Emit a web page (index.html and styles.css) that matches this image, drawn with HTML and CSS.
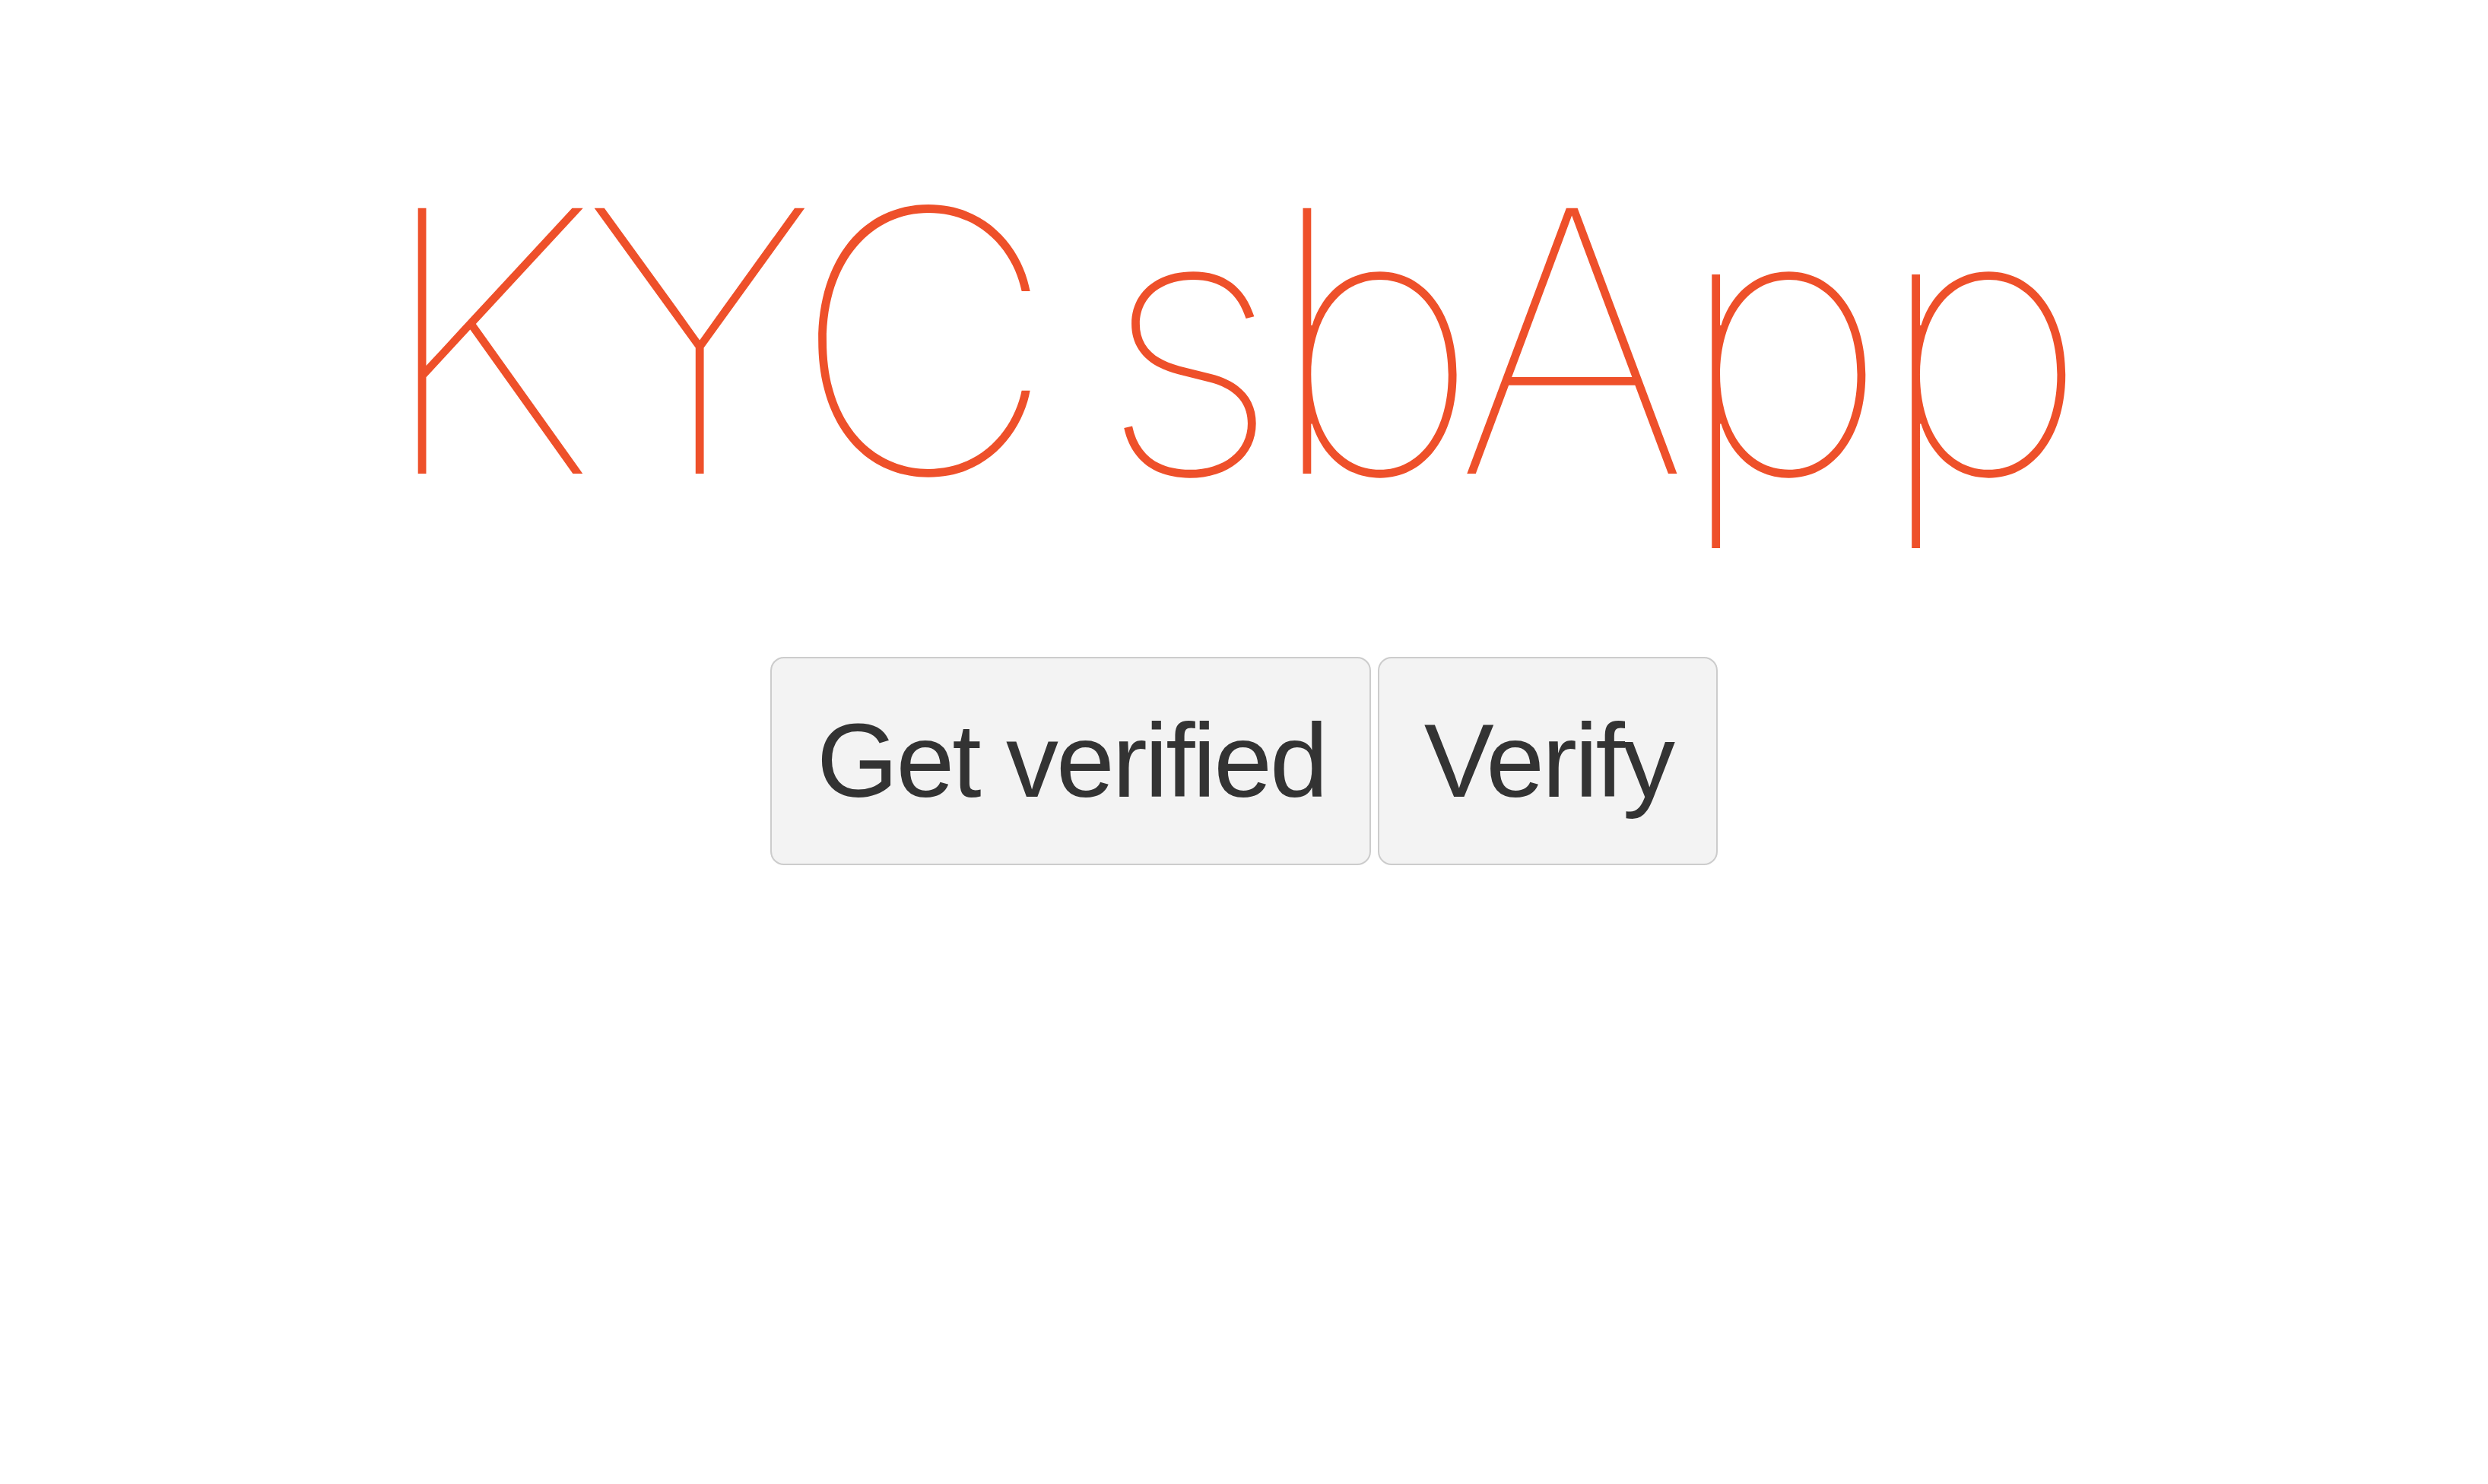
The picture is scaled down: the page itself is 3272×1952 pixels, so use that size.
FILE: index.html
```html
<!DOCTYPE html>
<html>
<head>
<meta charset="utf-8">
<link rel="stylesheet" href="styles.css">
</head>
<body>
<div class="page">
  <h1 class="title">KYC sbApp</h1>
  <div class="actions">
    <button class="btn">Get verified</button>
    <button class="btn">Verify</button>
  </div>
</div>
</body>
</html>
```
FILE: styles.css
```css
html, body {
  margin: 0;
  padding: 0;
  background: #ffffff;
}
.page {
  display: flex;
  flex-direction: column;
  align-items: center;
  padding-top: 185px;
}
.title {
  margin: 0;
  padding-right: 46px;
  font-family: "Inter", "Helvetica Neue", sans-serif;
  font-weight: 100;
  font-size: 480px;
  line-height: 1.1;
  color: #ee502a;
  letter-spacing: -16px;
  word-spacing: -45px;
  white-space: nowrap;
}
.actions {
  margin-top: 151px;
  display: flex;
  gap: 9px;
}
.btn {
  font-family: "Liberation Sans", Arial, sans-serif;
  font-size: 138px;
  line-height: 1.2;
  letter-spacing: -3px;
  color: #333333;
  background: #f3f3f3;
  border: 2px solid #cccccc;
  border-radius: 18px;
  padding: 52px 57px 52px 59px;
}
```
